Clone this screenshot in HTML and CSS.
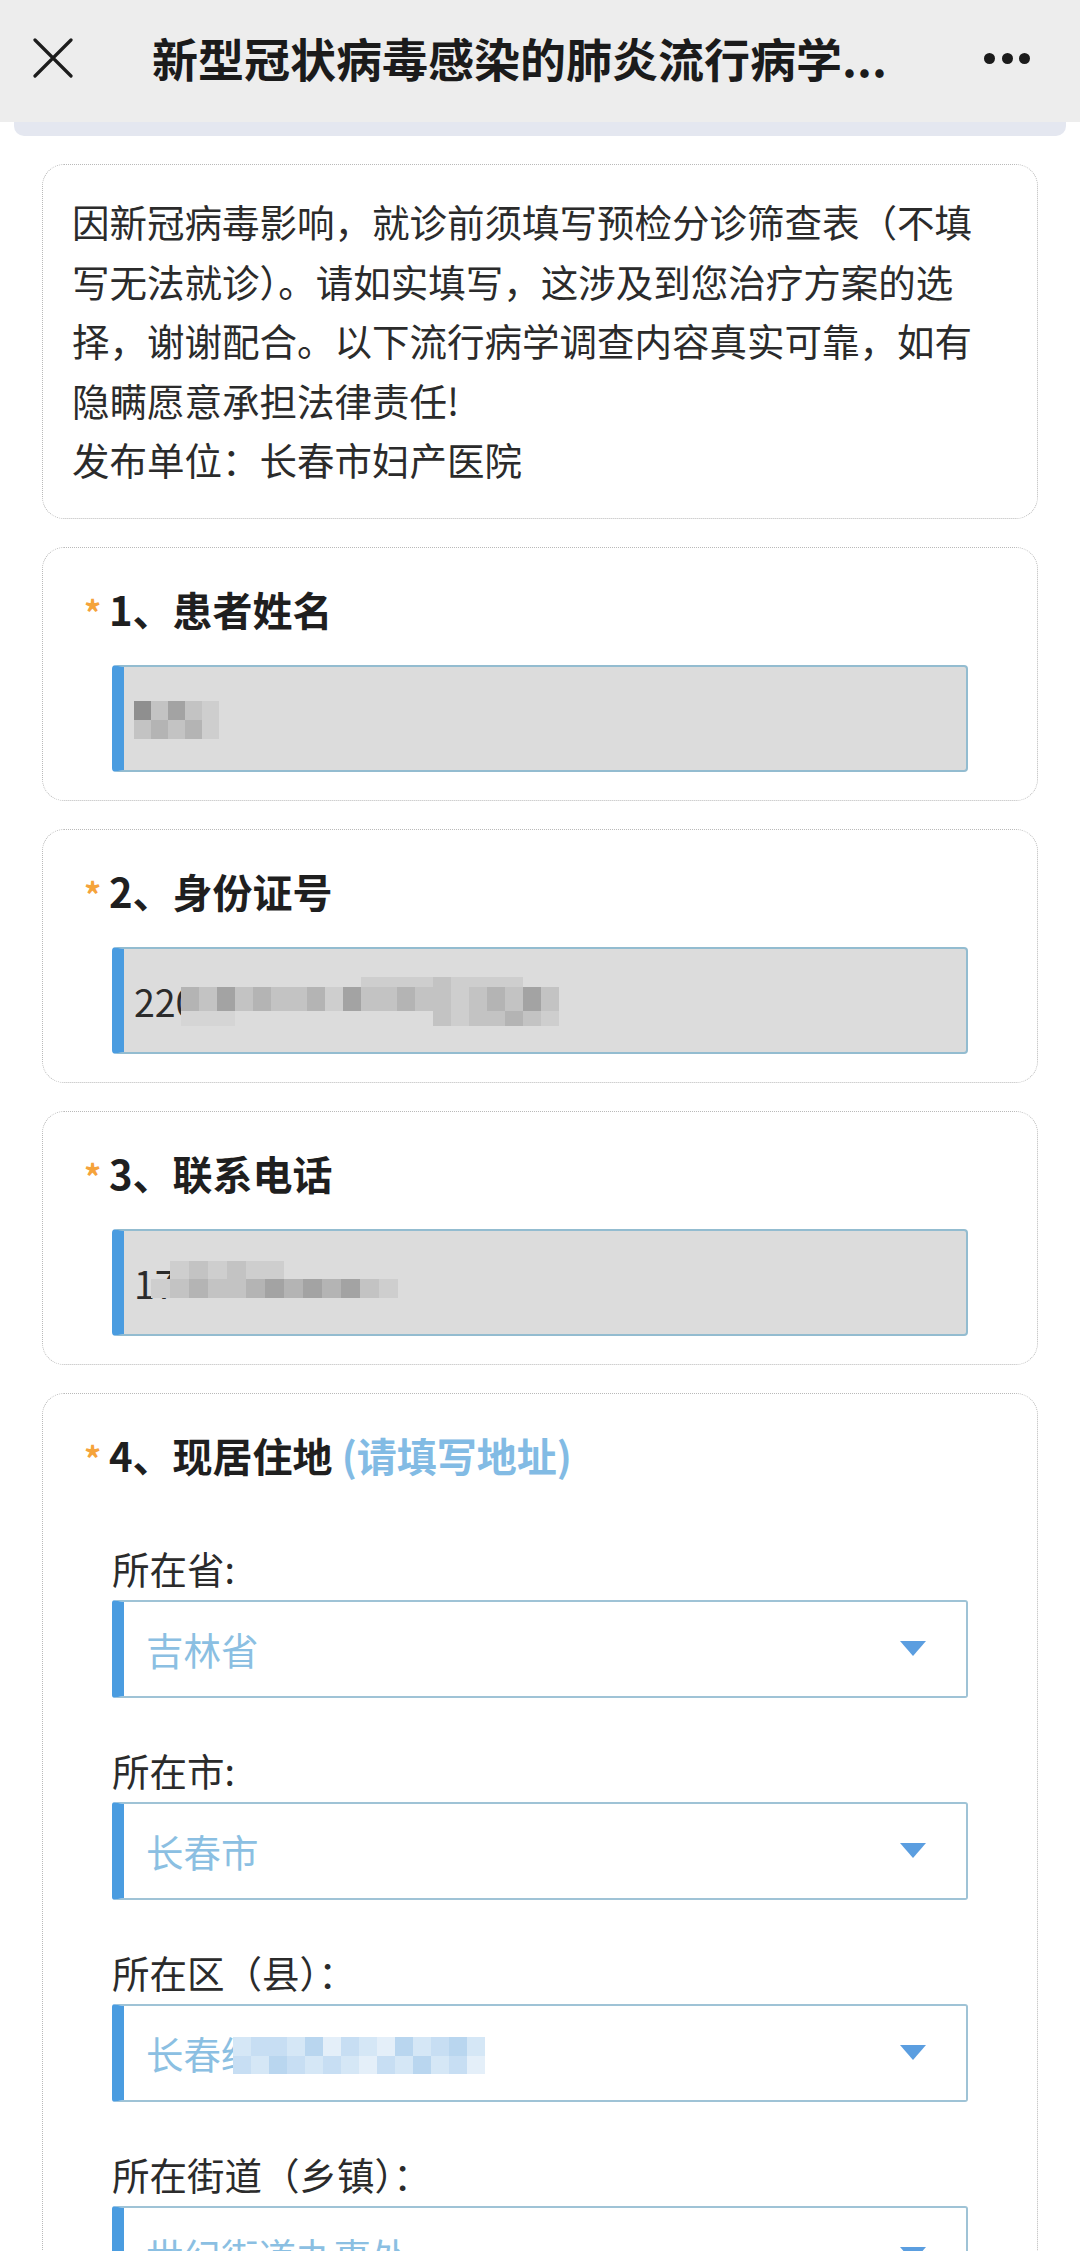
FILE: index.html
```html
<!DOCTYPE html>
<html lang="zh-CN">
<head>
<meta charset="utf-8">
<title>新型冠状病毒感染的肺炎流行病学调查表</title>
<link rel="stylesheet" href="styles.css">
</head>
<body>
<header class="topbar">
  <span class="close">
    <svg viewBox="0 0 40 40" width="40" height="40"><path d="M2 2 L38 38 M38 2 L2 38" stroke="#1d1d1d" stroke-width="3.2" fill="none" stroke-linecap="round"/></svg>
  </span>
  <h1 class="page-title">新型冠状病毒感染的肺炎流行病学...</h1>
  <span class="more"><i></i><i></i><i></i></span>
</header>
<div class="tab-bar"></div>

<main class="form">
  <section class="card notice">
    因新冠病毒影响，就诊前须填写预检分诊筛查表（不填写无法就诊）。请如实填写，这涉及到您治疗方案的选择，谢谢配合。以下流行病学调查内容真实可靠，如有隐瞒愿意承担法律责任!<br>发布单位：长春市妇产医院
  </section>

  <section class="card q">
    <div class="q-title"><span class="req">*</span>1、患者姓名</div>
    <div class="input">
      <span class="mosaic mz-name">
        <i class="g1"></i><i class="g4"></i><i class="g2"></i><i class="g4"></i><i class="g5"></i>
        <i class="g4"></i><i class="g3"></i><i class="g4"></i><i class="g3"></i><i class="g5"></i>
      </span>
    </div>
  </section>

  <section class="card q">
    <div class="q-title"><span class="req">*</span>2、身份证号</div>
    <div class="input">
      <span class="val">220</span>
      <span class="mosaic mz-id">
        <i></i><i></i><i></i><i></i><i></i><i></i><i></i><i></i><i></i><i></i><i class="g5"></i><i class="g5"></i><i class="g5"></i><i class="g5"></i><i class="g4"></i><i class="g5"></i><i class="g5"></i><i class="g5"></i><i class="g5"></i><i></i><i></i>
        <i class="g3"></i><i class="g4"></i><i class="g2"></i><i class="g4"></i><i class="g3"></i><i class="g4"></i><i class="g4"></i><i class="g3"></i><i class="g5"></i><i class="g2"></i><i class="g4"></i><i class="g4"></i><i class="g3"></i><i class="g4"></i><i class="g4"></i><i class="g5"></i><i class="g4"></i><i class="g3"></i><i class="g4"></i><i class="g2"></i><i class="g4"></i>
        <i class="g6"></i><i class="g6"></i><i class="g6"></i><i></i><i></i><i></i><i></i><i></i><i></i><i></i><i></i><i></i><i></i><i></i><i class="g4"></i><i class="g5"></i><i class="g4"></i><i class="g4"></i><i class="g3"></i><i class="g4"></i><i class="g5"></i>
      </span>
    </div>
  </section>

  <section class="card q">
    <div class="q-title"><span class="req">*</span>3、联系电话</div>
    <div class="input">
      <span class="val">17</span>
      <span class="mosaic mz-phone">
        <i></i><i class="g5"></i><i class="g4"></i><i class="g5"></i><i class="g4"></i><i class="g5"></i><i class="g5"></i><i></i><i></i><i></i><i></i><i></i><i></i>
        <i class="g5"></i><i class="g4"></i><i class="g3"></i><i class="g4"></i><i class="g4"></i><i class="g3"></i><i class="g2"></i><i class="g3"></i><i class="g2"></i><i class="g3"></i><i class="g2"></i><i class="g4"></i><i class="g5"></i>
      </span>
    </div>
  </section>

  <section class="card q">
    <div class="q-title"><span class="req">*</span>4、现居住地 <span class="hint">(请填写地址)</span></div>
    <div class="addr">
      <div class="field-label">所在省:</div>
      <div class="select"><span class="sel-val">吉林省</span><span class="caret"></span></div>

      <div class="field-label">所在市:</div>
      <div class="select"><span class="sel-val">长春市</span><span class="caret"></span></div>

      <div class="field-label">所在区（县）：</div>
      <div class="select">
        <span class="sel-val">长春经<span class="mosaic mz-district">
          <i class="b3"></i><i class="b2"></i><i class="b2"></i><i class="b3"></i><i class="b1"></i><i class="b4"></i><i class="b2"></i><i class="b3"></i><i class="b4"></i><i class="b1"></i><i class="b3"></i><i class="b2"></i><i class="b1"></i><i class="b3"></i>
          <i class="b2"></i><i class="b3"></i><i class="b1"></i><i class="b2"></i><i class="b3"></i><i class="b2"></i><i class="b3"></i><i class="b4"></i><i class="b2"></i><i class="b3"></i><i class="b1"></i><i class="b3"></i><i class="b2"></i><i class="b4"></i>
        </span></span>
        <span class="caret"></span>
      </div>

      <div class="field-label">所在街道（乡镇）：</div>
      <div class="select"><span class="sel-val">世纪街道办事处</span><span class="caret"></span></div>
    </div>
  </section>
</main>
</body>
</html>
```

FILE: styles.css
```css
html, body {
  margin: 0;
  padding: 0;
  background: #ffffff;
}

body {
  font-family: "Noto Sans CJK SC", "Noto Sans", sans-serif;
  color: #2b2b2b;
}

/* ---------- top bar ---------- */
.topbar {
  height: 122px;
  box-sizing: border-box;
  padding-bottom: 6px;
  background: #ededed;
  display: flex;
  align-items: center;
}

.close {
  margin-left: 33px;
  width: 40px;
  height: 40px;
  display: flex;
}

.page-title {
  flex: 1;
  margin: 0 0 0 79px;
  font-size: 46px;
  line-height: 1.2;
  font-weight: 700;
  color: #1b1b1b;
  white-space: nowrap;
}

.more {
  display: flex;
  gap: 6.5px;
  margin-right: 50px;
}

.more i {
  width: 11px;
  height: 11px;
  border-radius: 50%;
  background: #1b1b1b;
}

.tab-bar {
  margin: 0 14px;
  height: 14px;
  background: #e4e7f0;
  border-radius: 0 0 10px 10px;
}

/* ---------- form ---------- */
.form {
  padding: 0 42px 60px;
}

.card {
  border: 1px dotted #b9b9b9;
  border-radius: 22px;
  margin-top: 28px;
}

.notice {
  padding: 26px 45px 29px 29px;
  font-size: 37.5px;
  line-height: 59.5px;
  color: #2b2b2b;
}

.q {
  padding: 31px 69px 28px;
}

.q-title {
  margin-left: -28px;
  height: 60px;
  font-size: 40px;
  line-height: 60px;
  font-weight: 700;
  color: #1f1f1f;
  white-space: nowrap;
}

.req {
  display: inline-block;
  width: 25px;
  line-height: 1;
  font-size: 34px;
  color: #f5a33b;
}

.hint {
  color: #82bbe4;
}

.input {
  margin-top: 26px;
  height: 107px;
  box-sizing: border-box;
  background: #dcdcdc;
  border: 2px solid #93bcd0;
  border-left: 12px solid #4a9ce0;
  border-radius: 4px;
  padding-left: 10px;
  display: flex;
  align-items: center;
  font-size: 37.5px;
  color: #2b2b2b;
}

/* mosaic (redacted content) */
.mosaic {
  display: inline-grid;
  vertical-align: middle;
}

.mosaic i {
  display: block;
}

.mz-name {
  grid-template-columns: repeat(5, 17px);
  grid-auto-rows: 19px;
  margin-top: 4px;
}

.mz-id {
  grid-template-columns: repeat(21, 18px);
  grid-template-rows: 10px 24px 15px;
  margin-left: -15px;
  margin-top: 2px;
}

.mz-phone {
  grid-template-columns: repeat(13, 19px);
  grid-template-rows: 18px 19px;
  margin-left: -25px;
  margin-top: -6px;
}

.mz-district {
  grid-template-columns: repeat(14, 18px);
  grid-auto-rows: 18.5px;
  margin-left: -26px;
  position: relative;
  top: 3px;
}

.g1 { background: #8f8f8f; }
.g2 { background: #a3a3a3; }
.g3 { background: #b4b4b4; }
.g4 { background: #c3c3c3; }
.g5 { background: #cecece; }
.g6 { background: #d5d5d5; }

.b1 { background: #b9d6ef; }
.b2 { background: #c7def3; }
.b3 { background: #d5e7f6; }
.b4 { background: #e4eff9; }

/* address */
.addr {
  padding-top: 11px;
}

.field-label {
  margin-top: 48px;
  font-size: 37.5px;
  line-height: 48px;
  height: 48px;
  color: #2b2b2b;
  white-space: nowrap;
}

.select {
  margin-top: 8px;
  height: 98px;
  box-sizing: border-box;
  background: #ffffff;
  border: 2px solid #9fc3d6;
  border-left: 12px solid #4a9ce0;
  border-radius: 3px;
  padding: 0 40px 0 22px;
  display: flex;
  align-items: center;
  justify-content: space-between;
  font-size: 37.5px;
  color: #8bbfe2;
}

.sel-val {
  white-space: nowrap;
  display: flex;
  align-items: center;
}

.caret {
  width: 0;
  height: 0;
  border-left: 13.5px solid transparent;
  border-right: 13.5px solid transparent;
  border-top: 15px solid #5b9ee0;
}
```
